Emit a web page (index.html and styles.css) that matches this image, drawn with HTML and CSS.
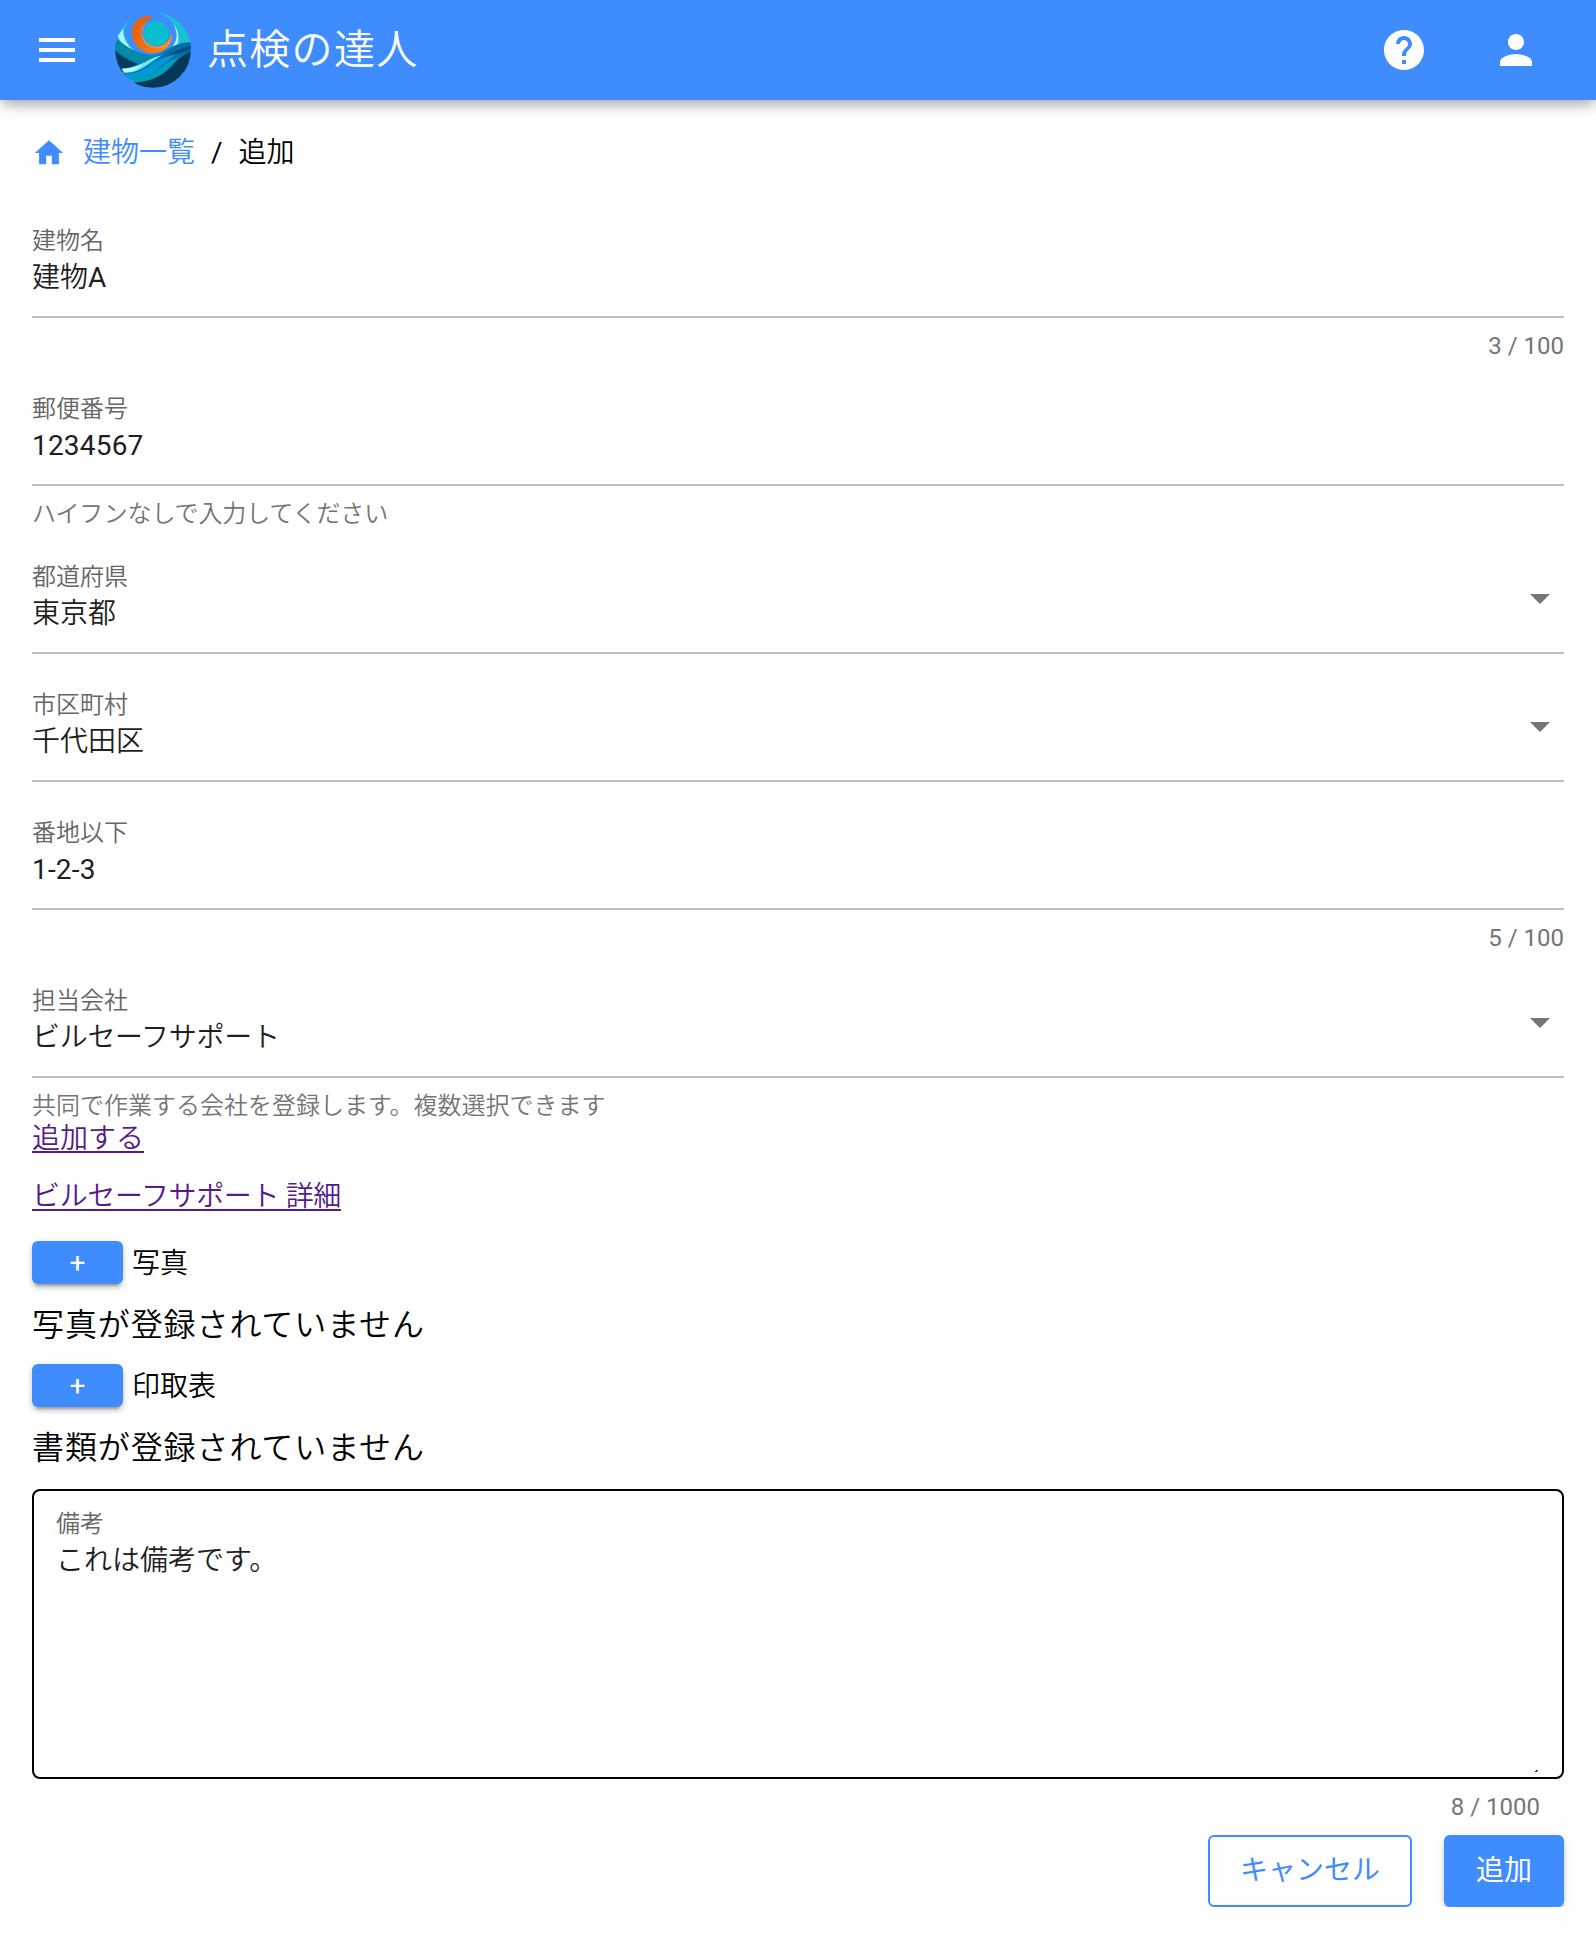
FILE: index.html
```html
<!DOCTYPE html>
<html lang="ja">
<head>
<meta charset="utf-8">
<title>点検の達人</title>
<link rel="stylesheet" href="styles.css">
</head>
<body>
<div class="topbar-area">
  <header class="topbar">
    <svg class="icon" viewBox="0 0 24 24"><path d="M3 18h18v-2H3v2zm0-5h18v-2H3v2zm0-7v2h18V6H3z"/></svg>
    <svg class="logo" viewBox="30 20 228 229">
      <defs>
        <clipPath id="disc"><circle cx="144" cy="134.500" r="114"/></clipPath>
        <linearGradient id="flame" x1="0" y1="0" x2="1" y2="1"><stop offset="0" stop-color="#e85f00"/><stop offset=".5" stop-color="#f56a08"/><stop offset="1" stop-color="#ff8a16"/></linearGradient>
        <linearGradient id="deep" x1="0" y1="0" x2="1" y2="0"><stop offset="0" stop-color="#087f9b"/><stop offset=".55" stop-color="#008bc4"/><stop offset="1" stop-color="#0069a4"/></linearGradient>
      </defs>
      <g clip-path="url(#disc)">
        <path fill="#16c5d3" d="M138 20C185 24 214 52 218 90Q218 116 200 133L260 116V20z"/>
        <path fill="#b6f5f4" d="M204 55Q225 91 207 118L196 134Q213 125 220 112Q224 75 204 55z"/>
        <path fill="#18c8d3" d="M78 42Q50 66 59 95L86 134L30 110L38 65z"/>
        <path fill="#a9f4f4" d="M54 70Q52 110 86 137L72 132Q47 116 38 92z"/>
        <path fill="url(#deep)" d="M30 95Q62 128 106 143Q145 157 180 135Q220 111 260 114V190L120 250L30 200z"/>
        <path fill="#0589a9" d="M30 105Q65 137 117 149Q143 155 164 151L115 172Q65 155 30 134z"/>
        <path fill="#063c5f" d="M30 135Q45 154 98 177L55 200L30 200z"/>
        <path fill="#70e8ef" d="M52 191Q94 188 133 164Q151 153 170 151Q143 166 126 180Q95 204 59 203z"/>
        <path fill="#b9f6f5" d="M49 191Q89 189 116 175Q93 201 57 202z"/>
        <path fill="#0099d5" d="M60 207Q108 207 145 176Q180 153 210 149Q181 169 161 187Q117 227 68 222z"/>
        <path fill="#009fb9" d="M69 219Q126 224 166 192Q204 158 260 145Q216 168 190 197Q151 237 79 230z"/>
        <path fill="#053856" d="M260 140Q222 152 200 183Q158 230 82 234L120 260H260z"/>
        <path fill="#006ca6" d="M260 112Q224 108 193 135L146 169Q184 155 214 143Q240 130 260 130z"/>
        <path fill="#004c7d" d="M260 122Q222 130 188 151Q226 146 260 131z"/>
        <path fill="#3f8cff" d="M30 204L50 202Q70 224 90 228L82 234L98 260H30z"/>
      </g>
      <path fill="#3f8cff" d="M138 26Q160 24 176 31Q210 47 213 82Q215 113 192 132Q211 88 181 56Q163 38 139 39Q88 47 81 87Q83 127 122 142L111 145Q75 132 66 105Q53 64 88 37Q111 26 138 26z"/>
      <path fill="url(#flame)" d="M145 34C111 24 79 50 81 84C83 119 112 145 147 144C179 143 202 119 201 85C189 116 169 129 143 126C98 121 93 54 145 34z"/>
      <path fill="#ff931d" d="M125 49Q103 81 119 106Q139 133 174 121Q195 110 201 86Q201 109 188 124Q176 132 155 130Q117 127 110 94Q107 65 125 49z"/>
      <circle cx="154" cy="85" r="38" fill="#08bfcf"/>
    </svg>
    <h1 class="brand">点検の達人</h1>
    <svg class="icon icon-help" viewBox="0 0 24 24"><path d="M12 2C6.480 2 2 6.480 2 12s4.480 10 10 10 10-4.480 10-10S17.520 2 12 2zm1 17h-2v-2h2v2zm2.070-7.750l-.9.920C13.450 12.900 13 13.500 13 15h-2v-.5c0-1.100.450-2.100 1.170-2.830l1.240-1.260c.370-.360.590-.860.590-1.410 0-1.100-.9-2-2-2s-2 .9-2 2H8c0-2.210 1.790-4 4-4s4 1.790 4 4c0 .880-.360 1.680-.930 2.250z"/></svg>
    <svg class="icon icon-user" viewBox="0 0 24 24"><path d="M12 12c2.210 0 4-1.790 4-4s-1.790-4-4-4-4 1.790-4 4 1.790 4 4 4zm0 2c-2.670 0-8 1.340-8 4v2h16v-2c0-2.660-5.330-4-8-4z"/></svg>
  </header>
</div>
<main class="page">
  <nav class="crumbs">
    <svg class="home" viewBox="0 0 24 24"><path d="M10 20v-6h4v6h5v-8h3L12 3 2 12h3v8z"/></svg>
    <a class="crumb-link">建物一覧</a>
    <span class="slash">/</span>
    <span>追加</span>
  </nav>

  <div class="field"><div class="label">建物名</div><div class="value">建物<span class="latin">A</span></div></div>
  <div class="hint count">3 / 100</div>

  <div class="field"><div class="label">郵便番号</div><div class="value latin">1234567</div></div>
  <div class="hint note">ハイフンなしで入力してください</div>

  <div class="field select"><div><div class="label">都道府県</div><div class="value">東京都</div></div><span class="arrow"></span></div>
  <div class="field select spaced"><div><div class="label">市区町村</div><div class="value">千代田区</div></div><span class="arrow"></span></div>
  <div class="field spaced"><div class="label">番地以下</div><div class="value latin">1-2-3</div></div>
  <div class="hint count">5 / 100</div>

  <div class="field select"><div><div class="label">担当会社</div><div class="value kana">ビルセーフサポート</div></div><span class="arrow"></span></div>
  <div class="hint last">共同で作業する会社を登録します。複数選択できます</div>

  <div class="link-row"><a class="link">追加する</a></div>
  <div class="link-row second"><a class="link kana-link">ビルセーフサポート 詳細</a></div>

  <div class="attach"><span class="add">+</span><span>写真</span></div>
  <p class="empty">写真が登録されていません</p>
  <div class="attach lower"><span class="add">+</span><span>印取表</span></div>
  <p class="empty">書類が登録されていません</p>

  <div class="notes">
    <div class="label">備考</div>
    <div class="value">これは備考です。</div>
    <svg class="grip" viewBox="0 0 3 3"><path d="M0 2h2V1h1V0h-2v1H0z"/></svg>
  </div>
  <div class="hint count notes-count">8 / 1000</div>

  <div class="actions">
    <span class="btn btn-outline">キャンセル</span>
    <span class="btn btn-fill">追加</span>
  </div>
</main>
</body>
</html>
```
FILE: styles.css
```css
* { box-sizing: border-box; }

body {
  margin: 0;
  background: #fff;
  color: #000;
  font-family: Roboto, "Noto Sans CJK JP", sans-serif;
  font-weight: 350;
  font-size: 28px;
  line-height: 36px;
}

.topbar-area { height: 120px; overflow: hidden; }

.topbar {
  display: flex;
  align-items: center;
  height: 100px;
  padding: 0 56px 0 33px;
  background: #3f8cff;
  color: #fff;
  box-shadow: 0 6px 10px -2px rgba(0, 0, 0, .2), 0 6px 18px -2px rgba(0, 0, 0, .2);
}

.icon { width: 48px; height: 48px; fill: #fff; }
.logo { width: 76px; height: 76px; margin-left: 34px; }
.brand { margin: 0 0 0 16px; font-size: 41px; font-weight: 350; letter-spacing: 1.300px; line-height: 60px; }
.icon-help { margin-left: auto; }
.icon-user { margin-left: 64px; }

.page { padding: 0 32px; }

.crumbs { display: flex; align-items: center; height: 64px; margin-bottom: 22px; padding-top: 2px; }
.home { width: 34px; height: 34px; fill: #3f8cff; }
.crumb-link { margin-left: 17px; color: #3f8cff; }
.slash { margin: 0 16px; font-weight: 400; }

.field { height: 112px; padding-top: 17px; border-bottom: 2px solid #c0c0c0; }
.spaced { margin-top: 16px; }
.label { font-size: 24px; line-height: 36px; color: #666; }
.value { padding-top: 1px; line-height: 36px; color: #1f1f1f; }
.latin { font-weight: 400; letter-spacing: .2px; }
.kana { letter-spacing: -.3px; }
.select { display: flex; justify-content: space-between; }
.arrow {
  width: 20px;
  height: 10px;
  margin: 35px 14px 0 0;
  background: #757575;
  clip-path: polygon(0 0, 100% 0, 50% 100%);
}

.hint { height: 56px; padding-top: 8px; font-size: 24px; line-height: 40px; color: #757575; }
.note { letter-spacing: -.120px; }
.count { text-align: right; font-weight: 400; }
.last { height: 40px; }

.link-row { height: 36px; margin-top: 3px; }
.second { margin-top: 22px; }
.link { color: #551a8b; text-decoration: underline; text-decoration-thickness: 2px; text-underline-offset: 3px; }
.kana-link { letter-spacing: -.350px; }

.attach { display: flex; align-items: flex-start; gap: 9px; height: 44px; margin-top: 27px; line-height: 44px; }
.add {
  width: 91px;
  height: 43px;
  margin-top: -1px;
  border-radius: 6px;
  background: #3f8cff;
  color: #fff;
  font-weight: 400;
  line-height: 43px;
  text-align: center;
  box-shadow: 0 6px 2px -4px rgba(0, 0, 0, .2), 0 4px 4px rgba(0, 0, 0, .14), 0 2px 10px rgba(0, 0, 0, .12);
}
.lower { margin-top: 16px; }
.empty { margin: 15px 0 0; font-size: 32px; line-height: 48px; letter-spacing: .9px; }

.notes {
  position: relative;
  height: 290px;
  margin-top: 17px;
  padding: 15px 22px;
  border: 2px solid #000;
  border-radius: 8px;
}
.grip { position: absolute; right: 24px; bottom: 4px; width: 3px; height: 3px; fill: #333; }
.notes-count { padding-right: 24px; }

.actions { display: flex; justify-content: flex-end; gap: 32px; }
.btn { height: 72px; border-radius: 6px; line-height: 71px; text-align: center; font-weight: 400; }
.btn-outline { width: 204px; border: 2px solid #3f8cff; color: #3f8cff; line-height: 67px; }
.btn-fill {
  width: 120px;
  background: #3f8cff;
  color: #fff;
  box-shadow: 0 6px 2px -4px rgba(0, 0, 0, .2), 0 4px 4px rgba(0, 0, 0, .14), 0 2px 10px rgba(0, 0, 0, .12);
}
```
